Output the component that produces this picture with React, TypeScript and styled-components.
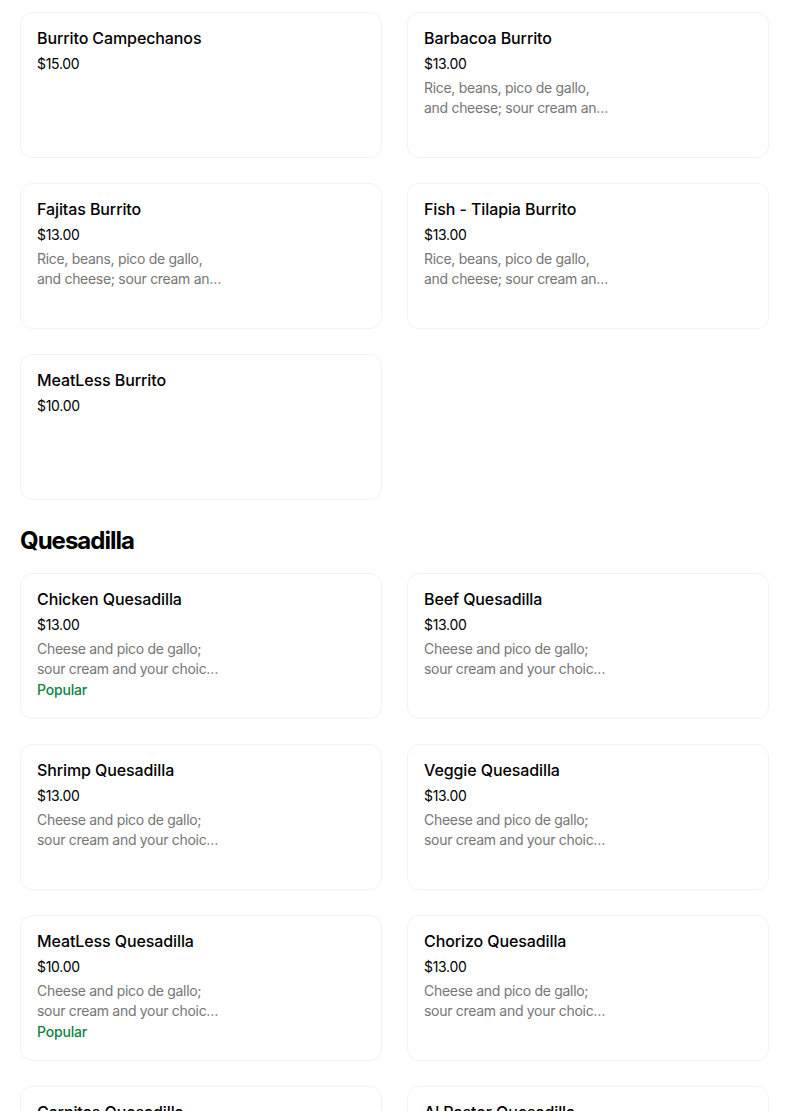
import React from 'react'
import styled, { createGlobalStyle } from 'styled-components'

interface MenuItem {
  name: string
  price: string
  /** description split the way the card wraps it; the last line is cut with an ellipsis */
  description?: string[]
  popular?: boolean
}

interface MenuSection {
  title?: string
  items: MenuItem[]
}

const RICE = ['Rice, beans, pico de gallo,', 'and cheese; sour cream and your choice of salsa']
const CHEESE = ['Cheese and pico de gallo;', 'sour cream and your choice of salsa']

const sections: MenuSection[] = [
  {
    items: [
      { name: 'Burrito Campechanos', price: '$15.00' },
      { name: 'Barbacoa Burrito', price: '$13.00', description: RICE },
      { name: 'Fajitas Burrito', price: '$13.00', description: RICE },
      { name: 'Fish - Tilapia Burrito', price: '$13.00', description: RICE },
      { name: 'MeatLess Burrito', price: '$10.00' },
    ],
  },
  {
    title: 'Quesadilla',
    items: [
      { name: 'Chicken Quesadilla', price: '$13.00', description: CHEESE, popular: true },
      { name: 'Beef Quesadilla', price: '$13.00', description: CHEESE },
      { name: 'Shrimp Quesadilla', price: '$13.00', description: CHEESE },
      { name: 'Veggie Quesadilla', price: '$13.00', description: CHEESE },
      { name: 'MeatLess Quesadilla', price: '$10.00', description: CHEESE, popular: true },
      { name: 'Chorizo Quesadilla', price: '$13.00', description: CHEESE },
      { name: 'Carnitas Quesadilla', price: '$13.00', description: CHEESE },
      { name: 'Al Pastor Quesadilla', price: '$13.00', description: CHEESE },
    ],
  },
]

const GlobalStyle = createGlobalStyle`
  body {
    margin: 0;
    background: #ffffff;
    font-family: Inter, "Liberation Sans", sans-serif;
    color: #000000;
  }
`

const Page = styled.main`
  padding: 12px 35px 0 20px;
`

const SectionTitle = styled.h2`
  margin: 25px 0 16px;
  font-size: 24px;
  line-height: 32px;
  font-weight: 700;
  letter-spacing: -1px;
`

const Grid = styled.div`
  display: grid;
  grid-template-columns: 1fr 1fr;
  gap: 25px;
`

const Card = styled.article`
  box-sizing: border-box;
  height: 146px;
  padding: 15px 16px 0 16px;
  border: 1px solid #f2f2f2;
  border-radius: 12px;
  background: #ffffff;
  display: flex;
  flex-direction: column;
`

const Name = styled.div`
  font-size: 16px;
  line-height: 20px;
  font-weight: 500;
  letter-spacing: -0.1px;
`

const Price = styled.div`
  margin-top: 6px;
  font-size: 14px;
  line-height: 20px;
  font-weight: 400;
  letter-spacing: -0.3px;
`

const Description = styled.div`
  margin-top: 4px;
  width: 185px;
  font-size: 14px;
  line-height: 20px;
  letter-spacing: -0.3px;
  color: #767676;
`

const DescLine = styled.div`
  white-space: nowrap;
  overflow: hidden;
  text-overflow: ellipsis;
`

const Badge = styled.div`
  margin-top: 1px;
  font-size: 14px;
  line-height: 20px;
  font-weight: 500;
  letter-spacing: -0.2px;
  color: #0e8345;
`

function ItemCard({ item }: { item: MenuItem }) {
  return (
    <Card>
      <Name>{item.name}</Name>
      <Price>{item.price}</Price>
      {item.description && (
        <Description>
          {item.description.map((line) => (
            <DescLine key={line}>{line}</DescLine>
          ))}
        </Description>
      )}
      {item.popular && <Badge>Popular</Badge>}
    </Card>
  )
}

export default function App() {
  return (
    <>
      <GlobalStyle />
      <Page>
        {sections.map((section, i) => (
          <section key={i}>
            {section.title && <SectionTitle>{section.title}</SectionTitle>}
            <Grid>
              {section.items.map((item) => (
                <ItemCard key={item.name} item={item} />
              ))}
            </Grid>
          </section>
        ))}
      </Page>
    </>
  )
}
